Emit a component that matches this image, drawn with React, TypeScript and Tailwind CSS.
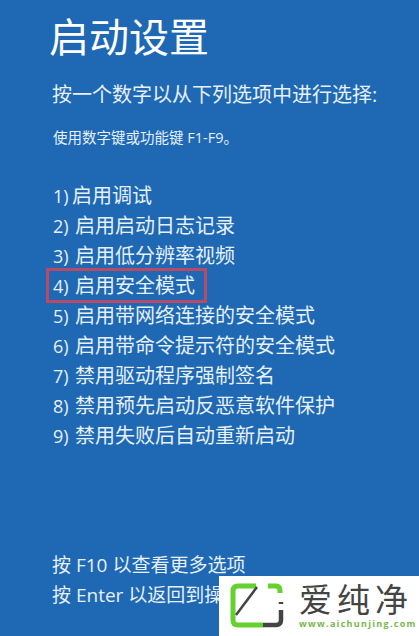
const items = [
  "启用调试",
  "启用启动日志记录",
  "启用低分辨率视频",
  "启用安全模式",
  "启用带网络连接的安全模式",
  "启用带命令提示符的安全模式",
  "禁用驱动程序强制签名",
  "禁用预先启动反恶意软件保护",
  "禁用失败后自动重新启动",
];
const font = "font-['Open_Sans','Noto_Sans_CJK_SC',sans-serif]";

export default function App() {
  return (
    <div className={`relative w-[419px] h-[636px] overflow-hidden bg-[#1f68b4] text-[#e6f0f7] ${font}`}>
      <div className="pl-[53px] pt-[13px] flex flex-col">
        <h1 className="-ml-[4px] text-[40px] leading-[48px] font-normal text-white">启动设置</h1>
        <p className="-ml-[1px] mt-[19px] text-[20px] leading-[30px]">按一个数字以从下列选项中进行选择:</p>
        <p className="mt-[17px] text-[14.5px] leading-[22px]">使用数字键或功能键 F1-F9。</p>
        <ul className="mt-[32px] flex flex-col">
          {items.map((t, i) => (
            <li key={t} className="relative h-[30px] text-[20px] leading-[30px] whitespace-nowrap flex gap-[4px]">
              <span className={i === 0 ? "w-[15px] text-[18px]" : "w-[18px] text-[18px]"}>{i + 1})</span>
              <span>{t}</span>
              {i === 3 && (
                <span className="absolute left-[-7px] top-[-3px] w-[161px] h-[35px] border-[3px] border-[#b84a66]" />
              )}
            </li>
          ))}
        </ul>
        <div className="mt-[99px] -ml-[1px] flex flex-col text-[19px] leading-[30px] whitespace-nowrap">
          <p>按 F10 以查看更多选项</p>
          <p>按 Enter 以返回到操作系统</p>
        </div>
      </div>
      <div className="absolute right-0 bottom-0 w-[200px] h-[60px] bg-white flex items-center pl-[11px] gap-[13px]">
        <svg width="56" height="46" viewBox="0 0 56 46" fill="none">
          <path d="M26 3H8Q3 3 3 8V37Q3 42 8 42H33" stroke="#66d02e" strokeWidth="5" />
          <path d="M38 3H46Q50 3 50 8V10" stroke="#66d02e" strokeWidth="5" />
          <path d="M6 32L27 4" stroke="#444" strokeWidth="2.5" />
          <path d="M33 42H46Q51 42 51 37V27M51 21V19" stroke="#444" strokeWidth="4.5" />
        </svg>
        <div className="flex flex-col items-start">
          <span className="text-[33px] leading-[34px] tracking-[5px] text-[#444] whitespace-nowrap">爱纯净</span>
          <span className="mt-[2px] text-[9px] leading-[10px] tracking-[1.3px] font-bold text-[#76b84a] whitespace-nowrap">www.aichunjing.com</span>
        </div>
      </div>
    </div>
  );
}
